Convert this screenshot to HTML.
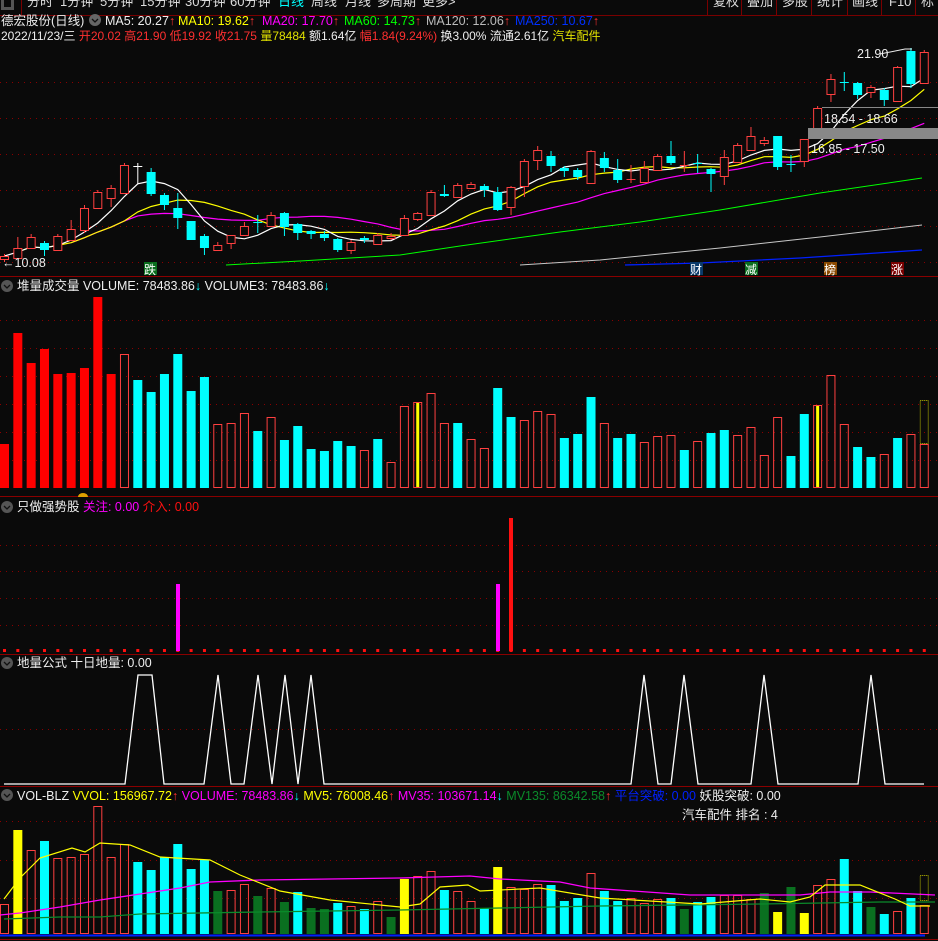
<!DOCTYPE html>
<html><head><meta charset="utf-8"><style>
html,body{margin:0;padding:0;background:#0a0a0a;width:938px;height:941px;overflow:hidden}
svg{display:block}
text{font-family:"Liberation Sans","Noto Sans CJK SC",sans-serif;font-size:12.5px}
</style></head><body>
<svg id="s" width="938" height="941" viewBox="0 0 938 941" xmlns="http://www.w3.org/2000/svg">
<rect width="938" height="941" fill="#0a0a0a"/>
<g id="g"></g>
<!-- menu -->
<rect x="0" y="0" width="938" height="15" fill="#0a0a0a"/>
<line x1="0" y1="15.5" x2="938" y2="15.5" stroke="#7a0000"/>
<rect x="1" y="-3" width="13" height="13" fill="#555"/><rect x="4" y="0" width="7" height="7" fill="#0a0a0a"/>
<line x1="21.5" y1="0" x2="21.5" y2="15" stroke="#7a0000"/>
<g fill="#ddd"><text x="27" y="6" style="font-size:13px">分时</text><text x="60" y="6" style="font-size:13px">1分钟</text><text x="100" y="6" style="font-size:13px">5分钟</text><text x="140" y="6" style="font-size:13px">15分钟</text><text x="185" y="6" style="font-size:13px">30分钟</text><text x="230" y="6" style="font-size:13px">60分钟</text><text x="278" y="6" fill="#00ffff" style="font-size:13px">日线</text><text x="311" y="6" style="font-size:13px">周线</text><text x="345" y="6" style="font-size:13px">月线</text><text x="377" y="6" style="font-size:13px">多周期</text><text x="422" y="6" style="font-size:13px">更多&gt;</text>
<text x="713" y="6" style="font-size:13px">复权</text><text x="747" y="6" style="font-size:13px">叠加</text><text x="782" y="6" style="font-size:13px">多股</text><text x="817" y="6" style="font-size:13px">统计</text><text x="852" y="6" style="font-size:13px">画线</text><text x="889" y="6" style="font-size:13px">F10</text><text x="921" y="6" style="font-size:13px">标</text></g>
<g stroke="#7a0000"><line x1="707.5" y1="0" x2="707.5" y2="15"/><line x1="741.5" y1="0" x2="741.5" y2="15"/><line x1="776.5" y1="0" x2="776.5" y2="15"/><line x1="811.5" y1="0" x2="811.5" y2="15"/><line x1="847.5" y1="0" x2="847.5" y2="15"/><line x1="881.5" y1="0" x2="881.5" y2="15"/><line x1="915.5" y1="0" x2="915.5" y2="15"/></g>
<!-- info -->
<text x="1" y="25" fill="#eee">德宏股份(日线)</text>
<circle cx="95" cy="20" r="6" fill="#666"/><path d="M92 19l3 3 3-3" stroke="#111" fill="none" stroke-width="1.3"/>
<text x="105" y="25" fill="#eee">MA5: 20.27<tspan fill="#ff3030">↑</tspan></text>
<text x="178" y="25" fill="#ffff00">MA10: 19.62<tspan fill="#ff3030">↑</tspan></text>
<text x="262" y="25" fill="#ff00ff">MA20: 17.70<tspan fill="#ff3030">↑</tspan></text>
<text x="344" y="25" fill="#00ff00">MA60: 14.73<tspan fill="#ff3030">↑</tspan></text>
<text x="426" y="25" fill="#bbb">MA120: 12.06<tspan fill="#ff3030">↑</tspan></text>
<text x="515" y="25" fill="#0030ff">MA250: 10.67<tspan fill="#ff3030">↑</tspan></text>
<text x="1" y="40" fill="#eee" style="font-size:12px">2022/11/23/三 <tspan fill="#ff3030">开20.02 高21.90 低19.92 收21.75 </tspan><tspan fill="#e0e000">量78484 </tspan>额1.64亿 <tspan fill="#ff3030">幅1.84(9.24%) </tspan>换3.00% 流通2.61亿 <tspan fill="#e0e000">汽车配件</tspan></text>
<!-- main labels -->
<line x1="822" y1="107.5" x2="938" y2="107.5" stroke="#888"/>
<rect x="808" y="128" width="130" height="11" fill="#888"/>
<text x="824" y="123" fill="#eee">18.54 - 18.66</text>
<text x="811" y="153" fill="#eee">16.85 - 17.50</text>
<text x="857" y="58" fill="#eee">21.90</text><path d="M880 54 L905 49 L912 49" stroke="#eee" fill="none"/>
<text x="2" y="267" fill="#eee">←10.08</text>
<rect x="144" y="262" width="13" height="13" fill="#0a6e1e"/><text x="144" y="274" fill="#fff" style="font-size:12px">跌</text>
<rect x="690" y="262" width="13" height="13" fill="#0a3a6a"/><text x="690" y="274" fill="#fff" style="font-size:12px">财</text>
<rect x="745" y="262" width="13" height="13" fill="#0a6e1e"/><text x="745" y="274" fill="#fff" style="font-size:12px">减</text>
<rect x="824" y="262" width="13" height="13" fill="#8a4a00"/><text x="824" y="274" fill="#fff" style="font-size:12px">榜</text>
<rect x="891" y="262" width="13" height="13" fill="#7a0000"/><text x="891" y="274" fill="#fff" style="font-size:12px">涨</text>
<!-- panel titles -->
<g>
<circle cx="7" cy="286" r="6" fill="#555"/><path d="M4 285l3 3 3-3" stroke="#111" fill="none" stroke-width="1.3"/>
<text x="17" y="290" fill="#eee">堆量成交量 VOLUME: 78483.86<tspan fill="#00ffff">↓</tspan>   VOLUME3: 78483.86<tspan fill="#00ffff">↓</tspan></text>
<circle cx="7" cy="507" r="6" fill="#555"/><path d="M4 506l3 3 3-3" stroke="#111" fill="none" stroke-width="1.3"/>
<text x="17" y="511" fill="#eee">只做强势股 <tspan fill="#ff00ff">关注: 0.00</tspan> <tspan fill="#ff1010">介入: 0.00</tspan></text>
<circle cx="7" cy="663" r="6" fill="#555"/><path d="M4 662l3 3 3-3" stroke="#111" fill="none" stroke-width="1.3"/>
<text x="17" y="667" fill="#eee">地量公式 十日地量: 0.00</text>
<circle cx="7" cy="795" r="6" fill="#555"/><path d="M4 794l3 3 3-3" stroke="#111" fill="none" stroke-width="1.3"/>
<text x="17" y="800" fill="#eee">VOL-BLZ  <tspan fill="#ffff00">VVOL: 156967.72</tspan><tspan fill="#ff3030">↑</tspan>  <tspan fill="#ff00ff">VOLUME: 78483.86</tspan><tspan fill="#00ffff">↓</tspan>  <tspan fill="#ffff00">MV5: 76008.46</tspan><tspan fill="#ff3030">↑</tspan> <tspan fill="#ff00ff">MV35: 103671.14</tspan><tspan fill="#00ffff">↓</tspan>  <tspan fill="#0a8a2a">MV135: 86342.58</tspan><tspan fill="#ff3030">↑</tspan>  <tspan fill="#0020ff">平台突破: 0.00</tspan> 妖股突破: 0.00</text>
<text x="682" y="819" fill="#eee">汽车配件    排名 :  4</text>
<path d="M78 497 a5 4 0 0 1 10 0z" fill="#e0a000"/>
</g>
</svg>
<script>
var g=document.getElementById('g'),NS='http://www.w3.org/2000/svg';
function el(t,a){var e=document.createElementNS(NS,t);for(var k in a)e.setAttribute(k,a[k]);g.appendChild(e);return e;}
function ln(x1,y1,x2,y2,c,d){var a={x1:x1,y1:y1,x2:x2,y2:y2,stroke:c};if(d)a['stroke-dasharray']=d;el('line',a);}
function pl(pts,c,w){el('polyline',{points:pts.map(function(p){return p.join(',')}).join(' '),fill:'none',stroke:c,'stroke-width':w||1});}
var ST=13.33;function L(i){return i*ST;}function C(i){return i*ST+4.5;}
[82.5,118.5,154.5,190.5,226.5,262.5,320.5,348.5,376.5,404.5,432.5,460.5,545.5,571.5,598.5,625.5,729.5,821.5,860.5,898.5].forEach(function(y){ln(0,y,938,y,'#8a0000','1 5');});
[276.5,496.5,654.5,786.5,939.5].forEach(function(y){ln(0,y,938,y,'#8a0000');});
var K=[['r',256,259,254,262],['r',248,258,237,258],['r',237,248,234,249],['c',243,250,241,256],['r',236,250,234,251],['r',229,240,220,241],['r',208,230,205,233],['r',192,208,190,208],['r',188,198,185,207],['r',165,193,163,194],['w',166,166,163,184],['c',172,194,168,196],['c',195,205,193,210],['c',208,218,193,229],['c',221,240,221,240],['c',236,248,234,255],['r',245,250,242,251],['r',235,243,235,249],['r',226,235,222,236],['cx',222,222,215,233],['r',215,226,212,227],['c',213,227,212,236],['c',224,233,223,240],['c',231,234,230,239],['c',234,238,231,241],['c',239,250,238,252],['r',242,250,240,254],['c',238,240,236,243],['r',235,244,233,245],['r',236,238,233,240],['r',218,235,215,236],['r',213,219,212,221],['r',192,215,190,216],['c',194,196,185,197],['r',185,197,183,198],['r',184,188,182,189],['c',186,190,184,197],['c',192,210,187,211],['r',187,207,186,215],['r',161,186,159,197],['r',150,160,146,170],['c',156,166,151,172],['c',168,171,166,177],['c',170,177,168,180],['r',151,183,150,184],['c',158,168,152,172],['c',170,180,159,183],['rx',179,179,165,183],['r',168,182,161,183],['r',156,170,154,171],['c',156,163,141,165],['rx',165,165,151,172],['cx',163,163,154,173],['c',169,174,168,192],['r',157,176,150,185],['r',145,162,143,163],['r',136,150,127,150],['r',140,143,137,146],['c',136,167,136,170],['cx',164,164,155,172],['r',139,161,139,167],['r',108,129,106,130],['r',79,94,74,102],['cx',82,82,72,91],['c',83,95,82,99],['r',87,92,85,98],['c',90,100,88,106],['r',67,101,66,102],['c',51,84,48,88],['r',52,83,50,84]];
pl([[226,265],[300,261],[400,255],[460,246],[560,232],[640,222],[720,210],[820,193],[922,178]],'#00ff00');
pl([[520,265],[600,260],[720,248],[820,237],[922,225]],'#c8c8c8');
pl([[625,265],[700,263],[800,258],[922,250]],'#0020ff',1.3);
var cl=K.map(function(k){return k[0][0]=='r'?k[1]:(k[0][0]=='c'?k[2]:k[1]);});
function ma(n,start){var p=[];for(var i=start;i<cl.length;i++){var s=0,c=0;for(var j=Math.max(0,i-n+1);j<=i;j++){s+=cl[j];c++;}p.push([C(i),(s/c).toFixed(1)]);}return p;}
pl(ma(20,5),'#ff00ff',1.2);pl(ma(10,1),'#ffff00',1.2);pl(ma(5,0),'#ffffff',1.2);
K.forEach(function(k,i){var x=C(i),t=k[0];var col=t[0]=='r'?'#ff4040':(t[0]=='c'?'#00ffff':'#fff');
 ln(x,k[3],x,k[4],col);
 if(t.length>1||t=='w'){ln(x-4.5,k[1]+.5,x+4.5,k[1]+.5,col);}
 else if(t=='r'){el('rect',{x:x-4,y:k[1]+.5,width:8,height:Math.max(1,k[2]-k[1]),fill:'#0a0a0a',stroke:col});}
 else el('rect',{x:x-4.5,y:k[1],width:9,height:Math.max(1,k[2]-k[1]),fill:col});});
var VT=[444,333,363,349,374,373,368,297,374,354,380,392,374,354,391,377,424,423,413,431,417,440,426,449,451,441,446,450,439,462,406,402,393,423,423,439,448,388,417,420,411,414,438,434,397,423,438,434,442,436,435,450,441,433,430,435,427,455,417,456,414,405,375,424,447,457,454,438,434,444];
var TY='rrrrrrrrrhcccccchhhchcccccchchhyhhchhcchhhccchcchhhchcchhhhccyhhcchchh';
function bar(i,top,base,t){var x=L(i);
 if(t=='r')el('rect',{x:x,y:top,width:9,height:base-top,fill:'#ff0000'});
 else if(t=='c')el('rect',{x:x,y:top,width:9,height:base-top,fill:'#00ffff'});
 else if(t=='g')el('rect',{x:x,y:top,width:9,height:base-top,fill:'#0a7020'});
 else if(t=='Y')el('rect',{x:x,y:top,width:9,height:base-top,fill:'#ffff00'});
 else{el('rect',{x:x+.5,y:top+.5,width:8,height:base-top-1,fill:'none',stroke:'#ff4040'});if(t=='y')el('rect',{x:x+3,y:top+1,width:3,height:base-top-2,fill:'#ffff00'});}}
VT.forEach(function(v,i){bar(i,v,488,TY[i]);});
el('rect',{x:L(69)+.5,y:400.5,width:8,height:43,fill:'none',stroke:'#c0c000','stroke-dasharray':'1 1'});
for(var i=0;i<70;i++)el('rect',{x:C(i)-1.5,y:649,width:3,height:3,fill:'#ff1010'});
el('rect',{x:176,y:584,width:4,height:67,fill:'#ff00ff'});
el('rect',{x:496,y:584,width:4,height:67,fill:'#ff00ff'});
el('rect',{x:509,y:518,width:4,height:133,fill:'#ff1010'});
pl([[4,784],[125,784],[138,675],[152,675],[164,784],[204,784],[218,675],[231,784],[244,784],[258,675],[272,784],[285,675],[298,784],[311,675],[324,784],[631,784],[644,675],[658,784],[671,784],[684,675],[698,784],[751,784],[764,675],[778,784],[858,784],[871,675],[885,784],[924,784]],'#ffffff',1.3);
var PT=[904,830,850,841,858,857,854,806,857,844,862,870,857,844,869,860,891,890,884,896,888,902,892,908,909,903,906,909,901,917,879,876,871,890,891,901,908,867,887,889,884,885,901,898,873,891,901,898,903,899,898,909,902,897,895,895,899,893,912,887,913,885,879,859,891,907,914,911,898,905];
var PY='hYhchhhhhhccccccghhghgcggchchgYhhch'+'hcYhhhccchcchhhcgcchhhgYgYhhccgchch';
PT.forEach(function(v,i){bar(i,v,934,PY[i]||'h');});
el('rect',{x:L(69)+.5,y:875.5,width:8,height:25,fill:'none',stroke:'#c0c000','stroke-dasharray':'1 1'});
pl([[0,915],[20,913],[60,907],[100,900],[140,894],[180,888],[210,882],[260,880],[330,879],[400,878],[470,876],[500,879],[560,882],[590,888],[690,895],[800,895],[830,892],[870,892],[935,895]],'#ff00ff',1.3);
pl([[4,919],[60,917],[100,917],[140,914],[260,912],[400,910],[500,908],[600,906],[760,904],[880,902],[935,902]],'#0a8a2a',1.3);
pl([[4,899],[20,878],[40,858],[72,848],[85,852],[100,843],[130,845],[160,857],[210,860],[240,875],[280,891],[330,900],[400,907],[420,904],[440,887],[468,885],[480,891],[540,888],[600,898],[700,904],[760,899],[790,902],[810,897],[825,885],[860,885],[895,899],[910,906],[930,906]],'#ffff00',1.2);
ln(0,935,925,935,'#0020ff');ln(0,936,925,936,'#0020ff');
</script>
</body></html>
